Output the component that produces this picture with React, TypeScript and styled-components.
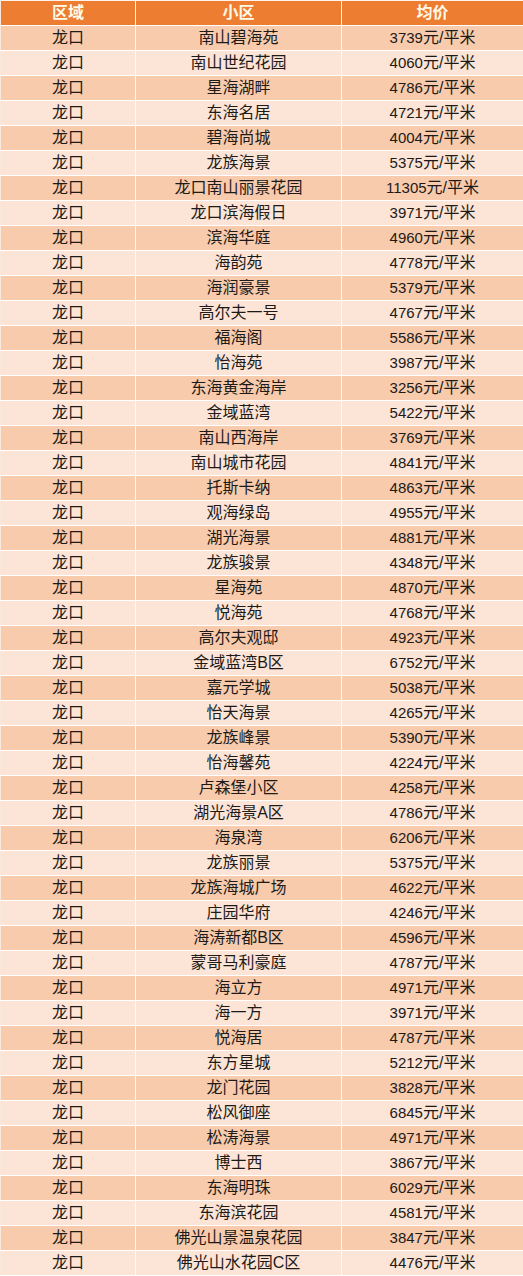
import React from "react";
import styled, { createGlobalStyle } from "styled-components";

const GlobalStyle = createGlobalStyle`
  html, body {
    margin: 0;
    padding: 0;
    background: #ffffff;
  }
  body {
    font-family: "Liberation Sans", "Noto Sans CJK SC", sans-serif;
  }
`;

const Table = styled.div`
  width: 523px;
  display: flex;
  flex-direction: column;
  border-top: 1px solid #fdf3ec;
  background: #ffffff;
`;

const Row = styled.div<{ $variant: "head" | "odd" | "even" }>`
  display: grid;
  grid-template-columns: 135px 206px 1fr;
  height: 24px;
  border-bottom: 1px solid #ffffff;
  background: ${(p) =>
    p.$variant === "head" ? "#ed7d31" : p.$variant === "odd" ? "#f8cbad" : "#fce4d6"};
`;

const Cell = styled.div<{ $head?: boolean }>`
  display: flex;
  align-items: center;
  justify-content: center;
  border-left: 1px solid #fff7f1;
  font-size: 16px;
  line-height: 24px;
  white-space: nowrap;
  color: ${(p) => (p.$head ? "#fffbe9" : "#1d1a18")};
  font-weight: ${(p) => (p.$head ? 700 : 400)};
  &:first-child {
    border-left: 1px solid #fbe8dc;
  }
`;

const Price = styled.span`
  font-size: 15px;
`;

const data: [string, string][] = [
  ["南山碧海苑", "3739"],
  ["南山世纪花园", "4060"],
  ["星海湖畔", "4786"],
  ["东海名居", "4721"],
  ["碧海尚城", "4004"],
  ["龙族海景", "5375"],
  ["龙口南山丽景花园", "11305"],
  ["龙口滨海假日", "3971"],
  ["滨海华庭", "4960"],
  ["海韵苑", "4778"],
  ["海润豪景", "5379"],
  ["高尔夫一号", "4767"],
  ["福海阁", "5586"],
  ["怡海苑", "3987"],
  ["东海黄金海岸", "3256"],
  ["金域蓝湾", "5422"],
  ["南山西海岸", "3769"],
  ["南山城市花园", "4841"],
  ["托斯卡纳", "4863"],
  ["观海绿岛", "4955"],
  ["湖光海景", "4881"],
  ["龙族骏景", "4348"],
  ["星海苑", "4870"],
  ["悦海苑", "4768"],
  ["高尔夫观邸", "4923"],
  ["金域蓝湾B区", "6752"],
  ["嘉元学城", "5038"],
  ["怡天海景", "4265"],
  ["龙族峰景", "5390"],
  ["怡海馨苑", "4224"],
  ["卢森堡小区", "4258"],
  ["湖光海景A区", "4786"],
  ["海泉湾", "6206"],
  ["龙族丽景", "5375"],
  ["龙族海城广场", "4622"],
  ["庄园华府", "4246"],
  ["海涛新都B区", "4596"],
  ["蒙哥马利豪庭", "4787"],
  ["海立方", "4971"],
  ["海一方", "3971"],
  ["悦海居", "4787"],
  ["东方星城", "5212"],
  ["龙门花园", "3828"],
  ["松风御座", "6845"],
  ["松涛海景", "4971"],
  ["博士西", "3867"],
  ["东海明珠", "6029"],
  ["东海滨花园", "4581"],
  ["佛光山景温泉花园", "3847"],
  ["佛光山水花园C区", "4476"],
];

export default function App() {
  return (
    <>
      <GlobalStyle />
      <Table>
        <Row $variant="head">
          <Cell $head>区域</Cell>
          <Cell $head>小区</Cell>
          <Cell $head>均价</Cell>
        </Row>
        {data.map(([name, price], i) => (
          <Row key={name + i} $variant={i % 2 === 0 ? "odd" : "even"}>
            <Cell>龙口</Cell>
            <Cell>{name}</Cell>
            <Cell>
              <Price>{price}</Price>元/平米
            </Cell>
          </Row>
        ))}
      </Table>
    </>
  );
}
